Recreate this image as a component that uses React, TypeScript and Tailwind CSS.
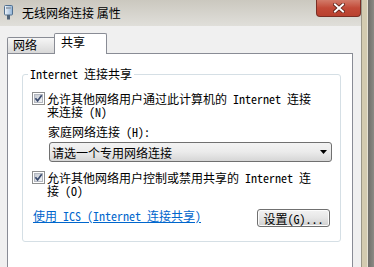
import React from "react";

function Check() {
  return (
    <svg width="13" height="13" viewBox="0 0 13 13" className="shrink-0 block">
      <defs>
        <linearGradient id="cbg" x1="0" y1="0" x2="1" y2="1">
          <stop offset="0" stopColor="#c3c8d0" />
          <stop offset="1" stopColor="#f4f5f7" />
        </linearGradient>
      </defs>
      <rect x="0.5" y="0.5" width="12" height="12" fill="#ffffff" stroke="#8e8f8f" />
      <rect x="2.5" y="2.5" width="8" height="8" fill="url(#cbg)" stroke="#b4b8c0" />
      <path d="M3.4 6.2 L5.6 8.9 L9.7 3.3" fill="none" stroke="#3a4b6e" strokeWidth="1.7" />
    </svg>
  );
}

function TitleBar() {
  return (
    <div className="h-[26px] flex items-start bg-linear-to-b from-[#cbc8bf] to-[#e0dfda]">
      <svg width="9" height="15" viewBox="0 0 9 15" className="mt-[5px] ml-[4px] shrink-0 block">
        <defs>
          <linearGradient id="plug" x1="0" y1="0" x2="1" y2="0">
            <stop offset="0" stopColor="#f2f6fb" />
            <stop offset="1" stopColor="#8fb2d6" />
          </linearGradient>
        </defs>
        <rect x="0.5" y="0.5" width="8" height="9.5" rx="1" fill="url(#plug)" stroke="#51708f" />
        <rect x="2" y="2" width="5" height="2" fill="#9aa7b5" />
        <rect x="3" y="10" width="3" height="4.5" fill="#4f6378" />
      </svg>
      <div className="ml-[9px] mt-[6px] leading-[13px] text-[12px] [font-family:'Noto_Sans_CJK_SC',sans-serif] text-black">
        无线网络连接 属性
      </div>
      <div className="ml-auto w-[45px] h-[17px] rounded-b-[4px] border border-t-0 border-[#7a2e24] bg-linear-to-b from-[#d27a69] via-[#c24a38] to-[#b9412f] flex items-center justify-center">
        <svg width="12" height="10" viewBox="0 0 12 10" className="block">
          <path d="M2 1.5 L10 8.5 M10 1.5 L2 8.5" stroke="#5a1d14" strokeWidth="3.6" strokeLinecap="square" />
          <path d="M2 1.5 L10 8.5 M10 1.5 L2 8.5" stroke="#ffffff" strokeWidth="2" strokeLinecap="square" />
        </svg>
      </div>
    </div>
  );
}

export default function App() {
  return (
    <div className="w-[374px] h-[267px] overflow-hidden flex bg-[#f0f0f0] text-[12px] leading-[13px] text-black [font-family:'Noto_Sans_Mono_CJK_SC','Noto_Sans_CJK_SC',sans-serif]">
      <div className="w-[361px] flex flex-col">
        <TitleBar />
        <div className="flex-1 flex flex-col pt-[7px] pl-[7px] pr-[8px]">
          {/* tabs */}
          <div className="h-[20px] flex items-end">
            <div className="w-[49px] h-[16px] border border-b-0 border-[#898c95] rounded-t-[2px] bg-linear-to-b from-[#f6f6f6] to-[#d8d8d8] pl-[5px] pt-[1px] leading-[12px]">
              网络
            </div>
            <div className="-ml-[2px] -mb-px relative z-10 w-[53px] h-[21px] border border-b-0 border-[#898c95] rounded-t-[2px] bg-white pl-[6px] pt-[2px] leading-[12px]">
              共享
            </div>
          </div>
          {/* panel */}
          <div className="flex-1 bg-white border-x border-t border-[#898c95] pt-[14px] pl-[14px]">
            <fieldset className="w-[319px] h-[174px] border border-[#d5dfe5] rounded-[3px] p-0 m-0">
              <legend className="ml-[5px] px-[2px] leading-[12px] text-[12px]">Internet 连接共享</legend>
              <div className="flex flex-col pl-[9px] pt-[12px]">
                <div className="flex items-start gap-[2px]">
                  <Check />
                  <div className="leading-[13px]">
                    允许其他网络用户通过此计算机的 Internet 连接
                    <br />
                    来连接 (N)
                  </div>
                </div>
                <div className="mt-[7px] pl-[16px] leading-[13px]">家庭网络连接 (H):</div>
                <div className="mt-[4px] ml-[17px] w-[283px] h-[20px] border border-[#707070] rounded-[3px] bg-linear-to-b from-[#f3f3f3] via-[#ebebeb] to-[#d6d6d6] flex items-center justify-between pl-[2px] pr-[4px]">
                  <span className="leading-[13px]">请选一个专用网络连接</span>
                  <svg width="7" height="4" viewBox="0 0 7 4" className="block">
                    <polygon points="0,0 7,0 3.5,4" fill="#000000" />
                  </svg>
                </div>
                <div className="mt-[9px] flex items-start gap-[2px]">
                  <Check />
                  <div className="leading-[13px]">
                    允许其他网络用户控制或禁用共享的 Internet 连
                    <br />
                    接 (O)
                  </div>
                </div>
                <div className="mt-[12px] flex items-start justify-between pr-[10px]">
                  <span className="ml-[1px] leading-[13px] text-[#0066cc] underline underline-offset-[1px]">
                    使用 ICS (Internet 连接共享)
                  </span>
                  <div className="w-[73px] h-[18px] border border-[#707070] rounded-[3px] bg-linear-to-b from-[#f2f2f2] via-[#e6e6e6] to-[#cfcfcf] shadow-[inset_0_0_0_1px_#fcfcfc] flex items-center justify-center leading-[13px]">
                    设置(G)...
                  </div>
                </div>
              </div>
            </fieldset>
          </div>
        </div>
      </div>
      <div className="w-px bg-[#9a9687]" />
      <div className="w-[5px] bg-[#d3cbb0]" />
      <div className="w-px bg-[#e6e2d3]" />
      <div className="flex-1 bg-linear-to-r from-[#6f6e6a] to-[#8c8a84]" />
    </div>
  );
}
